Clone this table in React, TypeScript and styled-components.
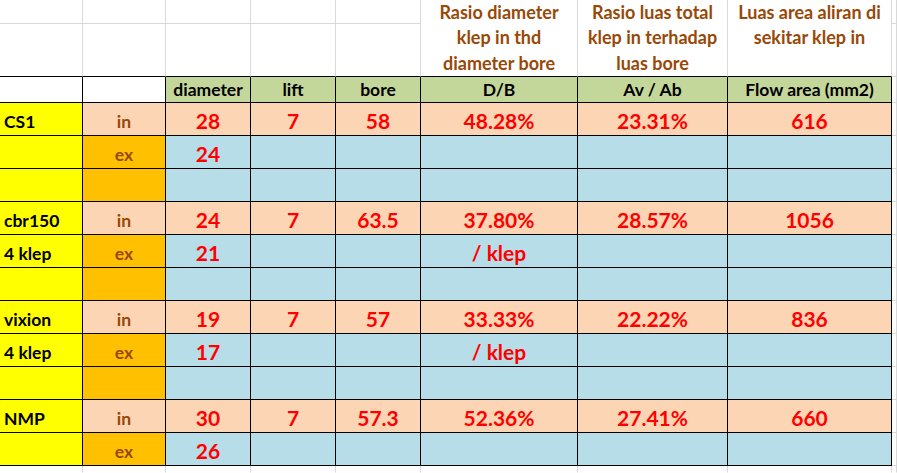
import React from "react";
import styled, { createGlobalStyle } from "styled-components";

const Global = createGlobalStyle`
  html, body { margin: 0; padding: 0; background: #ffffff; }
  body { overflow: hidden; font-family: Lato, "Liberation Sans", sans-serif; }
`;

const Sheet = styled.div`
  display: grid;
  grid-template-columns: 83px 83px 85px 85px 85px 157px 150px 164px 1fr;
  grid-template-rows: 24px 53px 26px repeat(11, 33px) 1fr;
  width: 897px;
  height: 473px;
  overflow: hidden;
`;

type Tone = "none" | "yellow" | "peach" | "orange" | "blue" | "green";

const bgMap: Record<Tone, string> = {
  none: "#ffffff",
  yellow: "#ffff00",
  peach: "#fcd5b4",
  orange: "#ffc000",
  blue: "#b7dee8",
  green: "#c4d79b",
};

type Kind = "label" | "io" | "num" | "head" | "plain";

const Cell = styled.div<{
  $tone: Tone;
  $right: "black" | "grid" | "none";
  $bottom: "black" | "grid" | "none";
  $kind: Kind;
}>`
  box-sizing: border-box;
  background: ${(p) => bgMap[p.$tone]};
  border-right: 1px solid
    ${(p) => (p.$right === "black" ? "#000" : p.$right === "grid" ? "#d9d9d9" : "transparent")};
  border-bottom: 1px solid
    ${(p) => (p.$bottom === "black" ? "#000" : p.$bottom === "grid" ? "#d9d9d9" : "transparent")};
  display: flex;
  align-items: flex-end;
  justify-content: ${(p) => (p.$kind === "label" ? "flex-start" : "center")};
  padding: 0 0 ${(p) => (p.$kind === "head" ? "1px" : "2px")} ${(p) => (p.$kind === "label" ? "4px" : "0")};
  font-weight: 700;
  white-space: nowrap;
  overflow: hidden;
  font-size: ${(p) => (p.$kind === "num" ? "21px" : "17.5px")};
  line-height: ${(p) => (p.$kind === "num" ? "25px" : "23px")};
  color: ${(p) =>
    p.$kind === "num" ? "#ff0000" : p.$kind === "io" ? "#984807" : "#000000"};
`;

const TitleCell = styled.div<{ $col: number }>`
  box-sizing: border-box;
  grid-column: ${(p) => p.$col};
  grid-row: 1 / span 2;
  border-right: 1px solid #d9d9d9;
  border-bottom: 1px solid #000;
  text-align: center;
  color: #984807;
  font-weight: 700;
  font-size: 18px;
  line-height: 25.4px;
  padding-top: 0;
  overflow: hidden;
`;

type Row = {
  label: string;
  io: "in" | "ex" | "";
  ioTone: Tone;
  tone: Tone;
  vals: string[];
};

const rows: Row[] = [
  { label: "CS1", io: "in", ioTone: "peach", tone: "peach", vals: ["28", "7", "58", "48.28%", "23.31%", "616"] },
  { label: "", io: "ex", ioTone: "orange", tone: "blue", vals: ["24", "", "", "", "", ""] },
  { label: "", io: "", ioTone: "orange", tone: "blue", vals: ["", "", "", "", "", ""] },
  { label: "cbr150", io: "in", ioTone: "peach", tone: "peach", vals: ["24", "7", "63.5", "37.80%", "28.57%", "1056"] },
  { label: "4 klep", io: "ex", ioTone: "orange", tone: "blue", vals: ["21", "", "", "/ klep", "", ""] },
  { label: "", io: "", ioTone: "orange", tone: "blue", vals: ["", "", "", "", "", ""] },
  { label: "vixion", io: "in", ioTone: "peach", tone: "peach", vals: ["19", "7", "57", "33.33%", "22.22%", "836"] },
  { label: "4 klep", io: "ex", ioTone: "orange", tone: "blue", vals: ["17", "", "", "/ klep", "", ""] },
  { label: "", io: "", ioTone: "orange", tone: "blue", vals: ["", "", "", "", "", ""] },
  { label: "NMP", io: "in", ioTone: "peach", tone: "peach", vals: ["30", "7", "57.3", "52.36%", "27.41%", "660"] },
  { label: "", io: "ex", ioTone: "orange", tone: "blue", vals: ["26", "", "", "", "", ""] },
];

const headers = ["diameter", "lift", "bore", "D/B", "Av / Ab", "Flow area (mm2)"];

const titles = [
  { col: 6, text: ["Rasio diameter", "klep in thd", "diameter bore"] },
  { col: 7, text: ["Rasio luas total", "klep in terhadap", "luas bore"] },
  { col: 8, text: ["Luas area aliran di", "sekitar klep in"] },
];

export default function App() {
  const cells: React.ReactNode[] = [];

  // Row 1 and 2 (top, outside table)
  for (let r = 1; r <= 2; r++) {
    for (let c = 1; c <= 5; c++) {
      cells.push(
        <Cell
          key={`t${r}-${c}`}
          style={{ gridRow: r, gridColumn: c }}
          $tone="none"
          $right="grid"
          $bottom={r === 2 ? "black" : "grid"}
          $kind="plain"
        />
      );
    }
    cells.push(
      <Cell key={`t${r}-9`} style={{ gridRow: r, gridColumn: 9 }} $tone="none" $right="grid" $bottom="grid" $kind="plain" />
    );
  }

  const titleNodes = titles.map((t) => (
    <TitleCell key={`title${t.col}`} $col={t.col}>
      {t.text.map((line) => (
        <div key={line}>{line}</div>
      ))}
    </TitleCell>
  ));

  return (
    <>
      <Global />
      <Sheet>
        {cells}
        {titleNodes}
        {/* header row */}
        <Cell $tone="none" $right="black" $bottom="black" $kind="plain" />
        <Cell $tone="none" $right="black" $bottom="black" $kind="plain" />
        {headers.map((h) => (
          <Cell key={h} $tone="green" $right="black" $bottom="black" $kind="head">
            {h}
          </Cell>
        ))}
        <Cell $tone="none" $right="grid" $bottom="grid" $kind="plain" />
        {/* data rows */}
        {rows.map((row, i) => (
          <React.Fragment key={i}>
            <Cell $tone="yellow" $right="black" $bottom="black" $kind="label">
              {row.label}
            </Cell>
            <Cell $tone={row.ioTone} $right="black" $bottom="black" $kind="io">
              {row.io}
            </Cell>
            {row.vals.map((v, j) => (
              <Cell key={j} $tone={row.tone} $right="black" $bottom="black" $kind="num">
                {v}
              </Cell>
            ))}
            <Cell $tone="none" $right="grid" $bottom="grid" $kind="plain" />
          </React.Fragment>
        ))}
        {/* trailing partial row */}
        {Array.from({ length: 9 }).map((_, k) => (
          <Cell key={`e${k}`} $tone="none" $right="grid" $bottom="none" $kind="plain" />
        ))}
      </Sheet>
    </>
  );
}
